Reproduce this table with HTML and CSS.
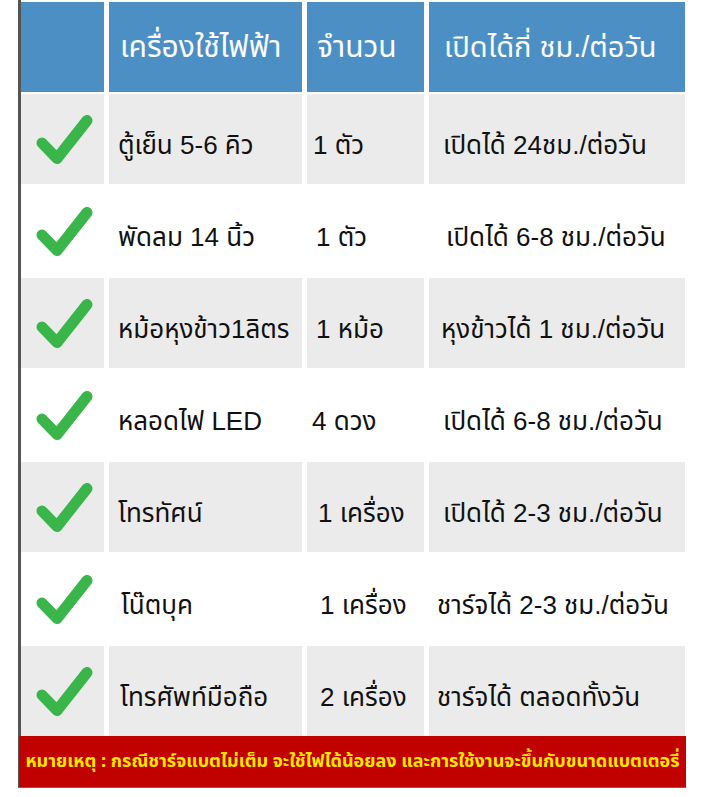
FILE: index.html
```html
<!DOCTYPE html>
<html lang="th">
<head>
<meta charset="utf-8">
<link rel="stylesheet" href="styles.css">
</head>
<body>
<div class="sheet">
  <div class="table">
    <div class="cell head"></div>
    <div class="cell head big">เครื่องใช้ไฟฟ้า</div>
    <div class="cell head big">จำนวน</div>
    <div class="cell head">เปิดได้กี่ ชม./ต่อวัน</div>

    <div class="cell gray chk"><svg viewBox="0 0 57 49" width="57" height="49"><polyline points="6,28 21,43.5 51,5.5"/></svg></div>
    <div class="cell gray name">ตู้เย็น 5-6 คิว</div>
    <div class="cell gray qty p6">1 ตัว</div>
    <div class="cell gray use p14">เปิดได้ 24ชม./ต่อวัน</div>

    <div class="cell chk"><svg viewBox="0 0 57 49" width="57" height="49"><polyline points="6,28 21,43.5 51,5.5"/></svg></div>
    <div class="cell name">พัดลม 14 นิ้ว</div>
    <div class="cell qty p9">1 ตัว</div>
    <div class="cell use p17">เปิดได้ 6-8 ชม./ต่อวัน</div>

    <div class="cell gray chk"><svg viewBox="0 0 57 49" width="57" height="49"><polyline points="6,28 21,43.5 51,5.5"/></svg></div>
    <div class="cell gray name">หม้อหุงข้าว1ลิตร</div>
    <div class="cell gray qty p9">1 หม้อ</div>
    <div class="cell gray use p12">หุงข้าวได้ 1 ชม./ต่อวัน</div>

    <div class="cell chk"><svg viewBox="0 0 57 49" width="57" height="49"><polyline points="6,28 21,43.5 51,5.5"/></svg></div>
    <div class="cell name">หลอดไฟ LED</div>
    <div class="cell qty p5">4 ดวง</div>
    <div class="cell use p14">เปิดได้ 6-8 ชม./ต่อวัน</div>

    <div class="cell gray chk"><svg viewBox="0 0 57 49" width="57" height="49"><polyline points="6,28 21,43.5 51,5.5"/></svg></div>
    <div class="cell gray name">โทรทัศน์</div>
    <div class="cell gray qty p11">1 เครื่อง</div>
    <div class="cell gray use p14">เปิดได้ 2-3 ชม./ต่อวัน</div>

    <div class="cell chk"><svg viewBox="0 0 57 49" width="57" height="49"><polyline points="6,28 21,43.5 51,5.5"/></svg></div>
    <div class="cell name shift">โน๊ตบุค</div>
    <div class="cell qty p13">1 เครื่อง</div>
    <div class="cell use p8">ชาร์จได้ 2-3 ชม./ต่อวัน</div>

    <div class="cell gray chk"><svg viewBox="0 0 57 49" width="57" height="49"><polyline points="6,28 21,43.5 51,5.5"/></svg></div>
    <div class="cell gray name shift2">โทรศัพท์มือถือ</div>
    <div class="cell gray qty p13">2 เครื่อง</div>
    <div class="cell gray use p8">ชาร์จได้ ตลอดทั้งวัน</div>
  </div>
  <div class="note"><span>หมายเหตุ : กรณีชาร์จแบตไม่เต็ม จะใช้ไฟได้น้อยลง และการใช้งานจะขึ้นกับขนาดแบตเตอรี่</span></div>
</div>
</body>
</html>
```
FILE: styles.css
```css
html, body {
  margin: 0;
  padding: 0;
  background: #ffffff;
}
body {
  font-family: "Liberation Sans", "Noto Sans Thai", "Noto Sans", sans-serif;
  color: #111111;
}
.sheet {
  margin-left: 18px;
  width: 665px;
  border-left: 3px solid #555555;
  padding-top: 2px;
}
.table {
  display: grid;
  grid-template-columns: 83px 193px 117px 256px;
  grid-template-rows: 90px repeat(7, 90px);
  column-gap: 5px;
  row-gap: 2px;
  background: #ffffff;
}
.cell {
  display: flex;
  align-items: center;
  font-size: 26px;
  white-space: nowrap;
  background: #ffffff;
  padding-top: 14px;
  box-sizing: border-box;
  overflow: visible;
}
.head {
  background: #4b8fc5;
  color: #ffffff;
  font-size: 29px;
  padding-top: 2px;
}
.head.big { font-size: 30px; }
.head:nth-child(2) { padding-left: 11px; }
.head:nth-child(3) { padding-left: 10px; }
.head:nth-child(4) { padding-left: 15px; }
.gray { background: #ebebeb; }
.chk {
  justify-content: center;
  padding-top: 0;
  padding-left: 4px;
}
.chk svg polyline {
  fill: none;
  stroke: #39b54a;
  stroke-width: 11;
  stroke-linecap: round;
  stroke-linejoin: round;
}
.name { padding-left: 9px; }
.shift { padding-left: 12px; }
.shift2 { padding-left: 11px; }
.p5 { padding-left: 5px; }
.p6 { padding-left: 6px; }
.p8 { padding-left: 8px; }
.p9 { padding-left: 9px; }
.p11 { padding-left: 11px; }
.p12 { padding-left: 12px; }
.p13 { padding-left: 13px; }
.p14 { padding-left: 14px; }
.p17 { padding-left: 17px; }
.note {
  margin-left: -2px;
  height: 51px;
  background: #c10000;
  border-bottom: 1px solid #6a6a6a;
  display: flex;
  align-items: center;
  justify-content: center;
  overflow: hidden;
}
.note span {
  font-family: "Noto Sans Thai", "Liberation Sans", sans-serif;
  color: #ffe800;
  font-weight: bold;
  font-size: 18px;
  white-space: nowrap;
}
```
